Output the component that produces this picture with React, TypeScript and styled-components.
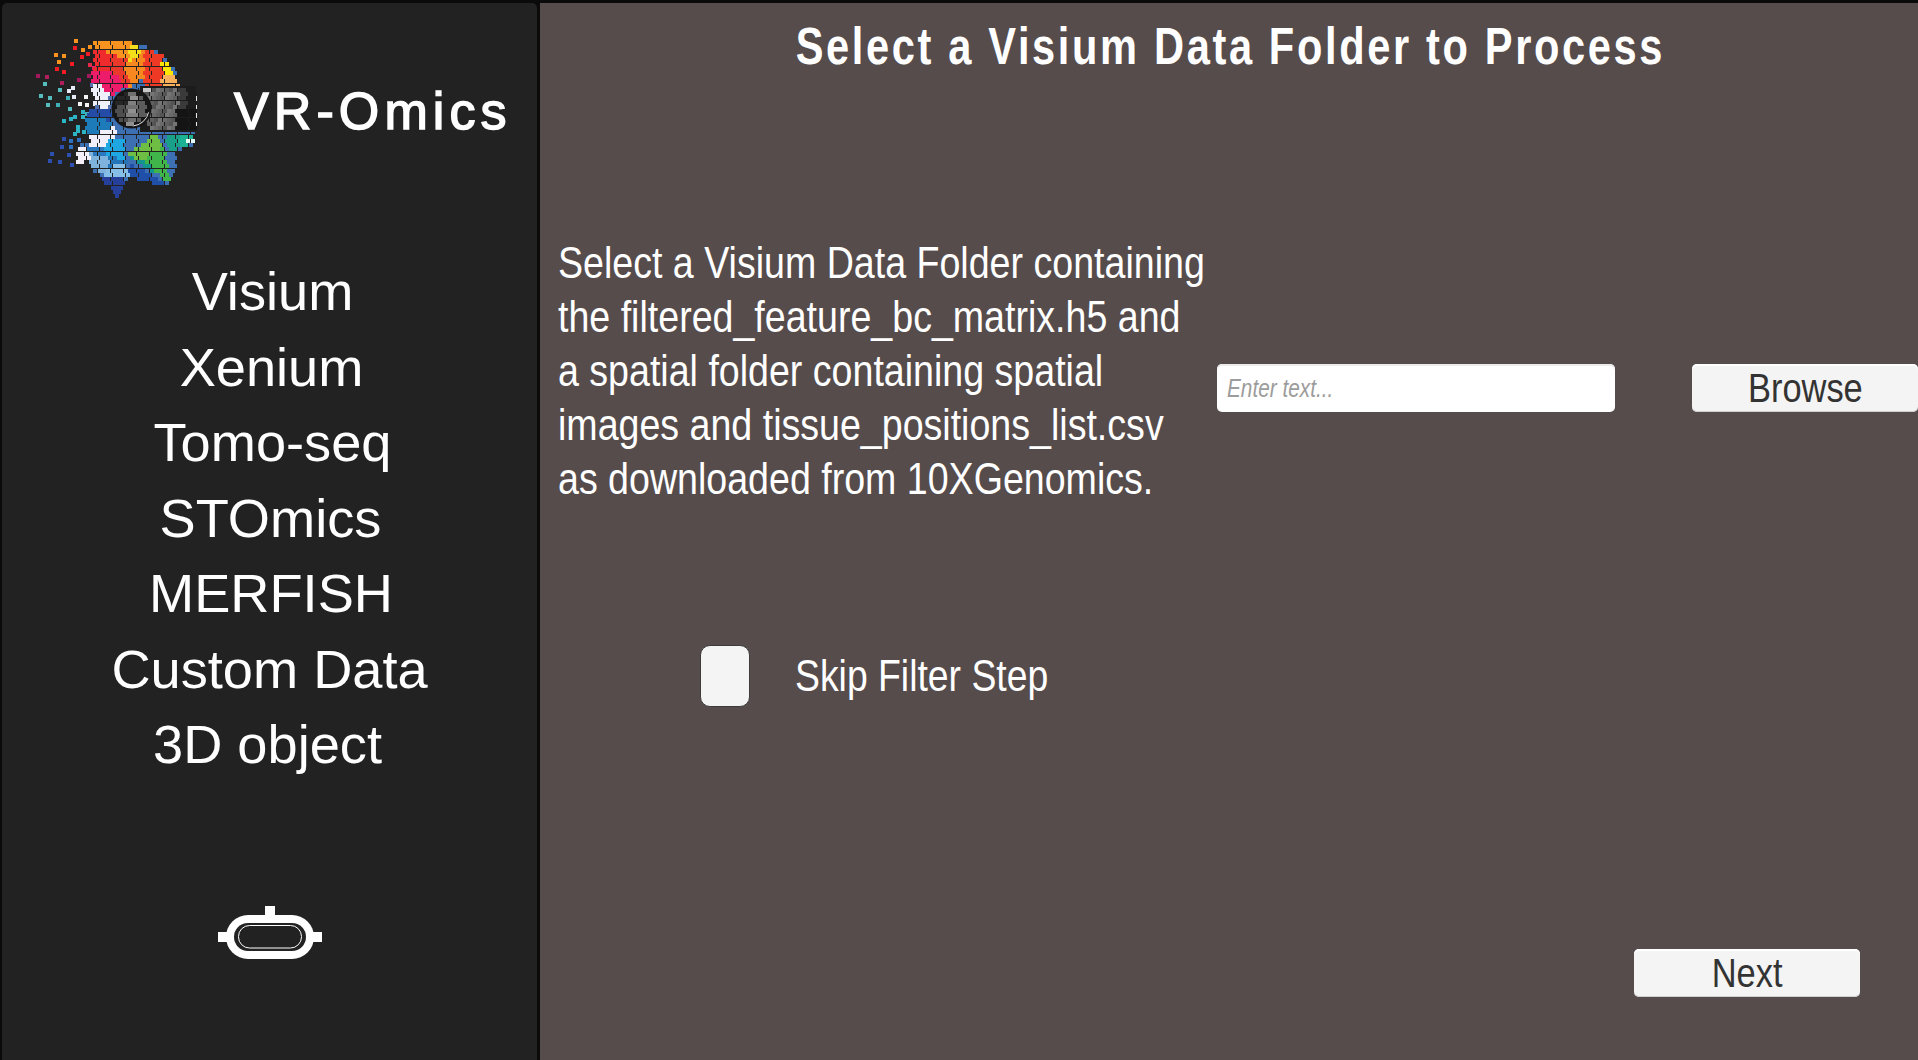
import styled, { createGlobalStyle } from 'styled-components';

const GlobalStyle = createGlobalStyle`
  html, body {
    margin: 0;
    padding: 0;
    width: 1918px;
    height: 1060px;
    overflow: hidden;
    background: #0a0a0a;
    font-family: "Liberation Sans", Arial, sans-serif;
  }
`;

type Pt = [number, number];
type Region = { color: string; points: Pt[] };
type Cell = { x: number; y: number; color: string };

// painted in order, later regions win. coords are 3x logo pixels
const REGIONS: Region[] = [
  {
    color: '#3d70b3',
    points: [
      [190, 36], [300, 36], [370, 58], [410, 85], [440, 125], [448, 170], [498, 175], [498, 300], [490, 320],
      [492, 345], [445, 362], [440, 410], [420, 465], [400, 474], [340, 450], [296, 440], [262, 512], [220, 445],
      [180, 410], [178, 385], [144, 395], [144, 350], [178, 335], [180, 310], [168, 300], [168, 265], [190, 235],
      [190, 160],
    ],
  },
  { color: '#f7931e', points: [[190, 34], [305, 34], [345, 70], [290, 110], [240, 78], [190, 60]] },
  { color: '#ef2b2d', points: [[190, 46], [240, 72], [300, 92], [255, 135], [190, 125]] },
  { color: '#e8392a', points: [[240, 90], [300, 90], [330, 130], [285, 172], [245, 130]] },
  { color: '#f7881f', points: [[285, 105], [340, 62], [395, 80], [390, 135], [335, 150], [300, 170]] },
  { color: '#ee3a24', points: [[340, 55], [398, 78], [398, 170], [340, 170], [345, 120]] },
  { color: '#f3e01a', points: [[295, 40], [332, 52], [335, 72], [298, 92]] },
  { color: '#ffe600', points: [[393, 78], [420, 105], [445, 150], [415, 135], [400, 135]] },
  { color: '#f8b05a', points: [[393, 135], [430, 135], [448, 170], [393, 170]] },
  { color: '#ec1c6b', points: [[188, 125], [255, 130], [295, 170], [240, 200], [188, 155]] },
  { color: '#5571b0', points: [[188, 155], [240, 190], [250, 235], [190, 235]] },
  { color: '#eef0fa', points: [[188, 165], [215, 165], [240, 200], [232, 238], [190, 225]] },
  { color: '#244ba6', points: [[188, 232], [240, 232], [255, 300], [168, 268]] },
  { color: '#1c7bb8', points: [[168, 262], [250, 272], [265, 305], [178, 315], [168, 300]] },
  { color: '#f1effa', points: [[180, 315], [250, 288], [258, 312], [232, 360], [180, 352]] },
  { color: '#2a79c0', points: [[165, 355], [235, 350], [220, 400], [180, 395]] },
  { color: '#1ea7e0', points: [[230, 330], [280, 330], [290, 388], [225, 390]] },
  { color: '#f4eff8', points: [[144, 350], [168, 355], [195, 378], [160, 400], [144, 398]] },
  { color: '#7fb2dc', points: [[178, 370], [245, 378], [240, 430], [205, 425], [178, 405]] },
  { color: '#2474b8', points: [[240, 380], [295, 390], [280, 440], [235, 440]] },
  { color: '#85bfe8', points: [[215, 430], [270, 395], [298, 435], [280, 445], [225, 448]] },
  { color: '#26409a', points: [[215, 445], [290, 440], [262, 515]] },
  { color: '#1f4fa8', points: [[296, 395], [420, 472], [395, 474], [340, 450], [296, 440]] },
  { color: '#12958c', points: [[298, 385], [360, 350], [415, 450], [345, 415]] },
  { color: '#6fbe44', points: [[295, 372], [375, 312], [400, 360], [335, 395]] },
  { color: '#3fb54a', points: [[340, 390], [405, 345], [422, 462]] },
  { color: '#1aa088', points: [[405, 312], [445, 312], [450, 360], [418, 370]] },
  { color: '#1cb394', points: [[445, 312], [485, 318], [488, 342], [445, 358]] },
  { color: '#e4fbf3', points: [[472, 332], [492, 320], [492, 340], [472, 348]] },
];

const SCATTER: [number, number, string][] = [
  [138, 34, '#f7931e'], [180, 52, '#f7931e'], [159, 59, '#f7931e'], [134, 55, '#ef1c24'], [175, 73, '#ef1c24'],
  [155, 81, '#ef1c24'], [77, 76, '#f7931e'], [102, 79, '#f7931e'], [86, 97, '#f7931e'], [127, 102, '#ef1c24'],
  [81, 118, '#ef1c24'], [101, 125, '#ef1c24'], [179, 104, '#e8294a'], [191, 113, '#ec1c6b'], [25, 138, '#a3195b'],
  [51, 141, '#b01e5e'], [96, 158, '#b01e5e'], [146, 151, '#a3195b'], [177, 137, '#a3195b'], [46, 163, '#55bdbd'],
  [91, 180, '#55bdbd'], [118, 184, '#e8ecf8'], [130, 175, '#e8ecf8'], [185, 166, '#5571b0'], [34, 199, '#55bdbd'],
  [60, 203, '#55bdbd'], [113, 205, '#3dafb5'], [133, 200, '#e8ecf8'], [168, 200, '#f5f5f5'], [55, 224, '#55bdbd'],
  [85, 226, '#3dafb5'], [151, 223, '#f5f5f5'], [172, 226, '#f5f5f5'], [195, 222, '#f5f5f5'], [120, 237, '#55bdbd'],
  [160, 245, '#2cb5c5'], [172, 252, '#3dafb5'], [160, 260, '#2cb5c5'], [134, 261, '#2cb5c5'], [122, 268, '#2cb5c5'],
  [103, 274, '#2cb5c5'], [144, 291, '#2cb5c5'], [144, 303, '#2cb5c5'], [134, 313, '#2cb5c5'], [162, 306, '#2cb5c5'],
  [101, 328, '#2d4fb0'], [124, 334, '#2d6fc0'], [148, 331, '#2d6fc0'], [97, 350, '#2d4fb0'], [122, 352, '#2d6fc0'],
  [65, 372, '#2d4fb0'], [118, 374, '#2d4fb0'], [61, 394, '#2d4fb0'], [90, 395, '#2d4fb0'], [126, 406, '#2d4fb0'],
];

const inside = (x: number, y: number, pts: Pt[]) => {
  let hit = false;
  for (let i = 0, j = pts.length - 1; i < pts.length; j = i++) {
    const [xi, yi] = pts[i];
    const [xj, yj] = pts[j];
    if (yi > y !== yj > y && x < ((xj - xi) * (y - yi)) / (yj - yi) + xi) hit = !hit;
  }
  return hit;
};

// brick pattern on whole pixels
const brick = (visit: (x: number, y: number, row: number, col: number) => void) => {
  for (let row = 0; row < 42; row++) {
    for (let col = 0; col < 34; col++) {
      visit(Math.round(46 + col * 4.33 + (row % 2 ? 2 : 0)), Math.round(11 + row * 4.25), row, col);
    }
  }
};

const HEAD_CELLS = (() => {
  const cells: Cell[] = [];
  brick((x, y) => {
    let color = '';
    for (const r of REGIONS) if (inside((x + 2) * 3, (y + 2) * 3, r.points)) color = r.color;
    if (color) cells.push({ x, y, color });
  });
  return cells;
})();

const VISOR_BAND: Pt[] = [[335, 172], [490, 172], [498, 180], [498, 300], [440, 305], [350, 292]];

const VISOR_CELLS = (() => {
  const cells: Cell[] = [];
  brick((x, y, row, col) => {
    const cx = (x + 2) * 3;
    const cy = (y + 2) * 3;
    if (!inside(cx, cy, VISOR_BAND)) return;
    let shade = 84 + ((row * 7 + col * 11) % 4) * 11;
    if (cx > 440 && cy > 240) shade = 20;
    else if (cx > 470) shade = 28;
    else if (cx > 445) shade = 58;
    if (cx < 365 && cy < 190) shade = 200;
    cells.push({ x, y, color: `rgb(${shade},${shade},${shade})` });
  });
  return cells;
})();

const LENS_CELLS = (() => {
  const cells: Cell[] = [];
  brick((x, y, row, col) => {
    const dx = (x + 2) * 3 - 303;
    const dy = (y + 2) * 3 - 235;
    if (dx * dx + dy * dy > 48 * 48) return;
    let shade = 112 + ((row * 5 + col * 3) % 3) * 16;
    if (dx < -14) shade = 78;
    if (dx < -6 && dy < -8) shade = 38;
    if (dx > 16) shade = 92;
    cells.push({ x, y, color: `rgb(${shade},${shade},${shade})` });
  });
  return cells;
})();

function Logo() {
  return (
    <LogoSvg viewBox="0 0 180 180" aria-label="VR-Omics logo" shapeRendering="crispEdges">
      {SCATTER.map(([x, y, c], i) => (
        <rect key={i} x={Math.round((x - 6) / 3)} y={Math.round((y - 6) / 3)} width={4} height={4} fill={c} />
      ))}
      {HEAD_CELLS.map((c, i) => (
        <rect key={i} x={c.x} y={c.y} width={4} height={4} fill={c.color} />
      ))}
      <rect x={110} y={56} width={56} height={46} fill="#1c1c1c" />
      <rect x={166} y={62} width={1} height={36} fill="#e8e8e8" />
      {VISOR_CELLS.map((c, i) => (
        <rect key={i} x={c.x} y={c.y} width={4} height={4} fill={c.color} />
      ))}
      <circle cx={101.5} cy={78.5} r={20} fill="#161616" shapeRendering="geometricPrecision" />
      <circle
        cx={101.5}
        cy={78.5}
        r={17.5}
        fill="none"
        stroke="#e8e8e8"
        strokeWidth={1}
        strokeDasharray="22 90"
        strokeDashoffset={-4}
        shapeRendering="geometricPrecision"
      />
      {LENS_CELLS.map((c, i) => (
        <rect key={i} x={c.x} y={c.y} width={4} height={4} fill={c.color} />
      ))}
    </LogoSvg>
  );
}

function HeadsetIcon() {
  return (
    <HeadsetSvg viewBox="0 0 104 53" aria-hidden="true">
      <rect x={47} y={0} width={10} height={12} fill="#fff" />
      <rect x={0} y={26} width={12} height={10} fill="#fff" />
      <rect x={92} y={26} width={12} height={10} fill="#fff" />
      <rect x={8} y={9} width={88} height={44} rx={22} fill="#fff" />
      <rect x={16} y={17} width={72} height={28} rx={14} fill="#222" />
      <rect x={20.5} y={19.5} width={63} height={22.5} rx={11} fill="#222" stroke="#fff" strokeWidth={1} />
    </HeadsetSvg>
  );
}

// the labels do not sit exactly on the column centre in the source
const NAV_ITEMS = [
  { label: 'Visium', nudge: 6 },
  { label: 'Xenium', nudge: 4 },
  { label: 'Tomo-seq', nudge: 6 },
  { label: 'STOmics', nudge: 2 },
  { label: 'MERFISH', nudge: 3 },
  { label: 'Custom Data', nudge: 0 },
  { label: '3D object', nudge: -4 },
];

const DESCRIPTION = [
  'Select a Visium Data Folder containing',
  'the filtered_feature_bc_matrix.h5 and',
  'a spatial folder containing spatial',
  'images and tissue_positions_list.csv',
  'as downloaded from 10XGenomics.',
];

export default function App() {
  return (
    <>
      <GlobalStyle />
      <Screen>
        <Sidebar>
          <Brand>
            <Logo />
            <BrandName>VR-Omics</BrandName>
          </Brand>
          <Nav>
            {NAV_ITEMS.map((item) => (
              <NavItem key={item.label} $nudge={item.nudge}>
                {item.label}
              </NavItem>
            ))}
          </Nav>
          <HeadsetSlot>
            <HeadsetIcon />
          </HeadsetSlot>
        </Sidebar>

        <Main>
          <Title>
            <Narrow>Select a Visium Data Folder to Process</Narrow>
          </Title>
          <FolderRow>
            <Description>
              {DESCRIPTION.map((line) => (
                <Narrow key={line}>{line}</Narrow>
              ))}
            </Description>
            <PathInput>
              <Placeholder>Enter text...</Placeholder>
            </PathInput>
            <BrowseButton>
              <Narrow $scale={0.84}>Browse</Narrow>
            </BrowseButton>
          </FolderRow>
          <SkipRow>
            <CheckBox />
            <SkipLabel>
              <Narrow $scale={0.83}>Skip Filter Step</Narrow>
            </SkipLabel>
          </SkipRow>
          <Footer>
            <NextButton>
              <Narrow $scale={0.84}>Next</Narrow>
            </NextButton>
          </Footer>
        </Main>
      </Screen>
    </>
  );
}

/* ===== styles ===== */

const Screen = styled.div`
  width: 1918px;
  height: 1060px;
  display: flex;
  background: #0a0a0a;
  padding-top: 3px;
  box-sizing: border-box;
  overflow: hidden;
`;

const Sidebar = styled.aside`
  width: 535px;
  margin-left: 2px;
  flex-shrink: 0;
  display: flex;
  flex-direction: column;
  background: #222222;
  border-radius: 5px 5px 0 0;
  color: #fff;
`;

const Brand = styled.div`
  height: 207px;
  padding: 27px 0 0 28px;
  box-sizing: border-box;
  display: flex;
  align-items: flex-start;
`;

const LogoSvg = styled.svg`
  width: 180px;
  height: 180px;
  flex-shrink: 0;
`;

const BrandName = styled.div`
  margin: 50px 0 0 24px;
  font-size: 52px;
  line-height: 62px;
  font-weight: 400;
  letter-spacing: 5.1px;
  -webkit-text-stroke: 1.5px #fff;
`;

const Nav = styled.nav`
  margin-top: 44px;
  display: flex;
  flex-direction: column;
  align-items: center;
`;

const NavItem = styled.div<{ $nudge: number }>`
  height: 75.5px;
  line-height: 75.5px;
  font-size: 54.2px;
  white-space: nowrap;
  margin-left: ${(props) => props.$nudge}px;
`;

const HeadsetSlot = styled.div`
  margin-top: 123px;
  display: flex;
  justify-content: center;
`;

const HeadsetSvg = styled.svg`
  width: 104px;
  height: 53px;
`;

const Main = styled.main`
  flex: 1;
  margin-left: 3px;
  background: #564c4c;
  color: #fff;
  display: flex;
  flex-direction: column;
  min-width: 0;
  overflow: hidden;
`;

const Narrow = styled.span<{ $scale?: number }>`
  display: inline-block;
  white-space: nowrap;
  transform: scaleX(${(props) => props.$scale ?? 0.8});
  transform-origin: center;
`;

const Title = styled.h1`
  margin: 0;
  height: 87px;
  padding-left: 2px;
  display: flex;
  justify-content: center;
  font-size: 52px;
  line-height: 87px;
  font-weight: 700;
  letter-spacing: 3.3px;
`;

const FolderRow = styled.div`
  margin-top: 146px;
  padding-left: 18px;
  height: 270px;
  display: flex;
  align-items: flex-start;
`;

const Description = styled.div`
  width: 645px;
  flex-shrink: 0;
  font-size: 45px;
  line-height: 54px;

  ${Narrow} {
    display: block;
    width: max-content;
    transform: scaleX(0.835);
    transform-origin: left;
  }
`;

const PathInput = styled.div`
  width: 398px;
  height: 48px;
  margin: 128px 0 0 14px;
  padding-left: 10px;
  box-sizing: border-box;
  flex-shrink: 0;
  display: flex;
  align-items: center;
  background: #fff;
  border-radius: 5px;
  box-shadow: inset 0 2px 0 #ececec;
`;

const Placeholder = styled.span`
  font-size: 26px;
  font-style: italic;
  color: #9c9c9c;
  display: inline-block;
  transform: scaleX(0.8);
  transform-origin: left;
  white-space: nowrap;
`;

const ActionButton = styled.button`
  height: 48px;
  padding: 0;
  border: 0;
  border-radius: 5px;
  background: #f4f4f4;
  box-shadow: inset 0 2px 0 #fff, inset 0 -1px 0 #cfcfcf;
  color: #333;
  font-family: inherit;
  font-size: 41px;
  line-height: 48px;
  flex-shrink: 0;
`;

const BrowseButton = styled(ActionButton)`
  width: 226px;
  margin: 128px 0 0 77px;
`;

const SkipRow = styled.div`
  margin-top: 139px;
  padding-left: 160px;
  display: flex;
  align-items: center;
`;

const CheckBox = styled.div`
  width: 50px;
  height: 62px;
  box-sizing: border-box;
  background: #f4f4f4;
  border: 1px solid #3c3c3c;
  border-radius: 10px;
`;

const SkipLabel = styled.div`
  margin-left: 45px;
  font-size: 45px;
  line-height: 62px;

  ${Narrow} {
    transform-origin: left;
  }
`;

const Footer = styled.div`
  margin-top: 242px;
  padding-right: 58px;
  display: flex;
  justify-content: flex-end;
`;

const NextButton = styled(ActionButton)`
  width: 226px;
`;
